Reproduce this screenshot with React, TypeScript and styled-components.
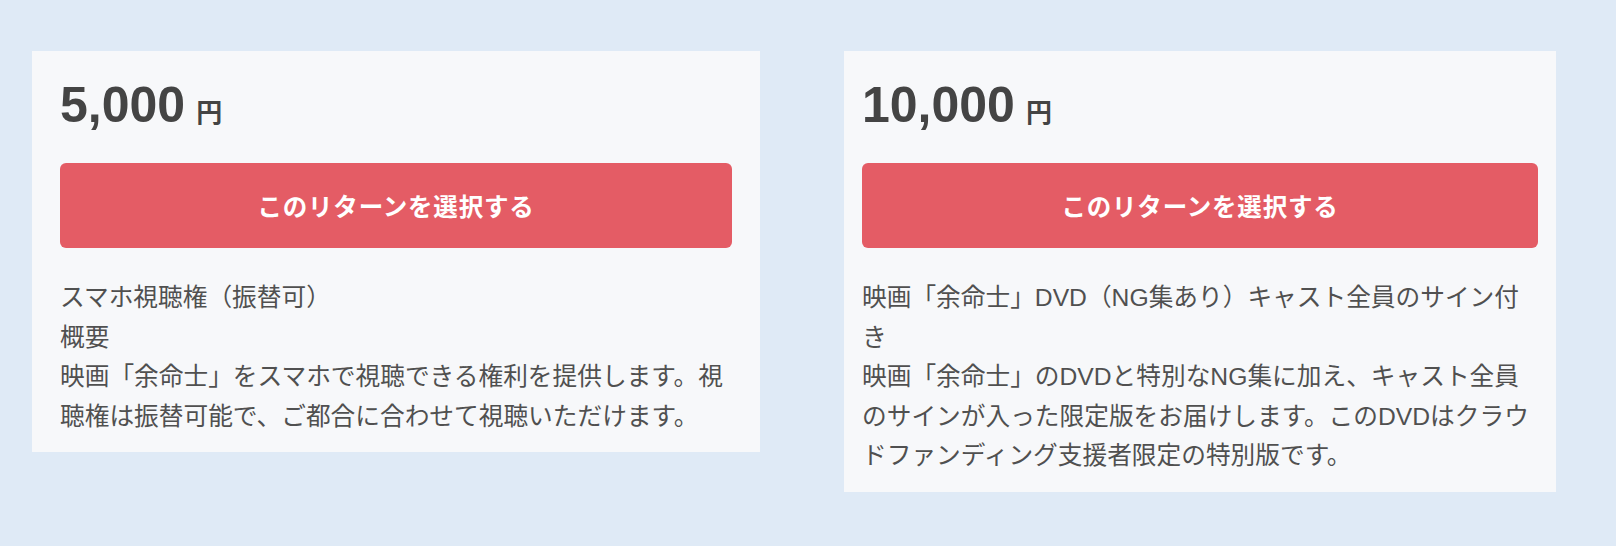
import React from "react";
import styled, { createGlobalStyle } from "styled-components";

const GlobalStyle = createGlobalStyle`
  html, body {
    margin: 0;
    padding: 0;
    background: #dfeaf6;
  }
  body {
    font-family: "Liberation Sans", "Noto Sans CJK JP", sans-serif;
    color: #4a4a4a;
  }
`;

const Page = styled.main`
  display: flex;
  align-items: flex-start;
  gap: 84px;
  padding: 51px 0 0 32px;
  min-height: 546px;
  box-sizing: border-box;
`;

const Card = styled.section<{ $width: number; $padX: number }>`
  width: ${(p) => p.$width}px;
  box-sizing: border-box;
  padding: 26px ${(p) => p.$padX}px 16px;
  background: #f7f8fa;
  display: flex;
  flex-direction: column;
`;

const Price = styled.div`
  font-family: "Liberation Sans", "Noto Sans CJK JP", sans-serif;
  font-size: 50px;
  line-height: 56px;
  font-weight: 700;
  color: #444444;
  margin-bottom: 30px;
`;

const Yen = styled.span`
  font-family: "Noto Sans CJK JP", sans-serif;
  font-size: 26px;
  line-height: 1;
  font-weight: 700;
  margin-left: 11px;
`;

const SelectButton = styled.button`
  height: 85px;
  width: 100%;
  margin: 0 0 30px;
  border: none;
  border-radius: 6px;
  background: #e45c65;
  color: #ffffff;
  font-family: "Liberation Sans", "Noto Sans CJK JP", sans-serif;
  font-size: 24.5px;
  letter-spacing: 0.8px;
  font-weight: 700;
  cursor: pointer;
`;

const Body = styled.div`
  font-size: 24.7px;
  line-height: 39.5px;
  color: #505050;
  text-spacing-trim: space-all;
`;

const Line = styled.p`
  margin: 0;
`;

type Reward = {
  price: string;
  width: number;
  padX: number;
  lines: string[];
};

const rewards: Reward[] = [
  {
    price: "5,000",
    width: 728,
    padX: 28,
    lines: [
      "スマホ視聴権（振替可）",
      "概要",
      "映画「余命士」をスマホで視聴できる権利を提供します。視聴権は振替可能で、ご都合に合わせて視聴いただけます。",
    ],
  },
  {
    price: "10,000",
    width: 712,
    padX: 18,
    lines: [
      "映画「余命士」DVD（NG集あり）キャスト全員のサイン付き",
      "映画「余命士」のDVDと特別なNG集に加え、キャスト全員のサインが入った限定版をお届けします。このDVDはクラウドファンディング支援者限定の特別版です。",
    ],
  },
];

export default function App() {
  return (
    <>
      <GlobalStyle />
      <Page>
        {rewards.map((r) => (
          <Card key={r.price} $width={r.width} $padX={r.padX}>
            <Price>
              {r.price}
              <Yen>円</Yen>
            </Price>
            <SelectButton type="button">このリターンを選択する</SelectButton>
            <Body>
              {r.lines.map((l, i) => (
                <Line key={i}>{l}</Line>
              ))}
            </Body>
          </Card>
        ))}
      </Page>
    </>
  );
}
